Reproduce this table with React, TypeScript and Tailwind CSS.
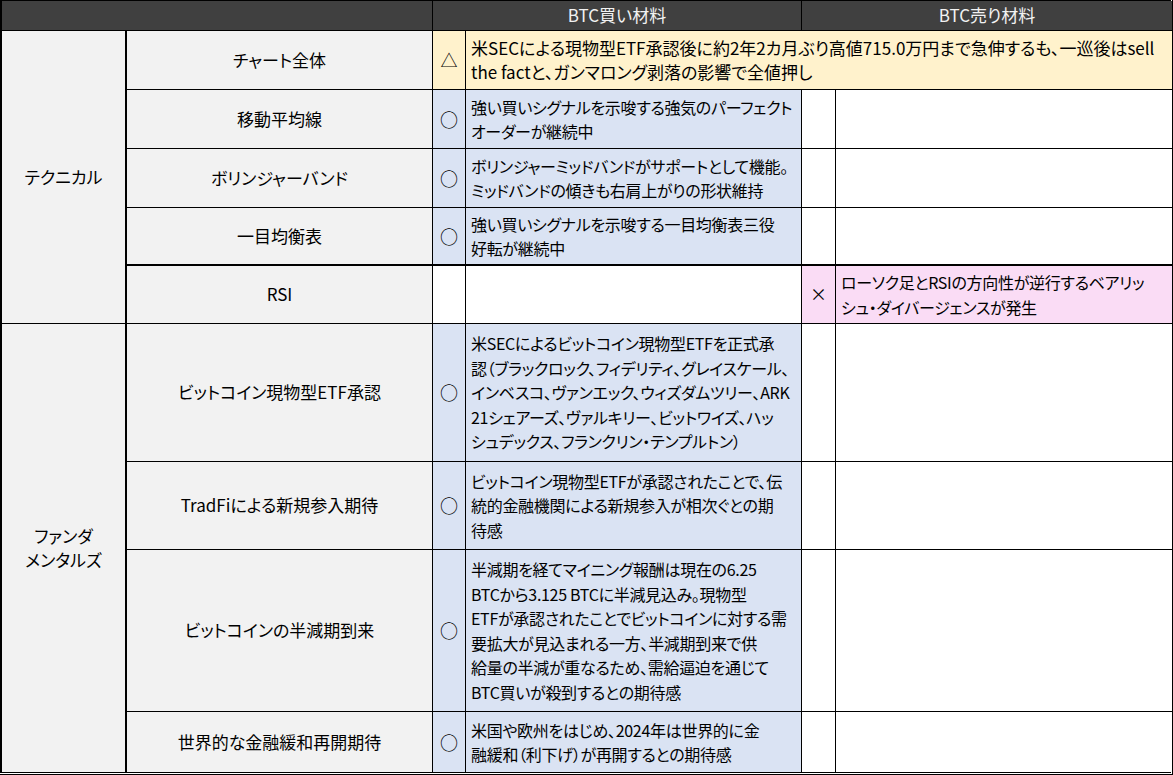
import React from "react";

type Row = {
  item: string;
  buyMark: string;
  buyLines: string[];
  sellMark: string;
  sellLines: string[];
  buyBg: string;
  sellBg: string;
  thickBottom?: boolean;
  last?: boolean;
};

const technical: Row[] = [
  {
    item: "移動平均線",
    buyMark: "○",
    buyLines: ["強い買いシグナルを示唆する強気のパーフェクト", "オーダーが継続中"],
    sellMark: "",
    sellLines: [],
    buyBg: "bg-[#dae3f3]",
    sellBg: "bg-white",
  },
  {
    item: "ボリンジャーバンド",
    buyMark: "○",
    buyLines: ["ボリンジャーミッドバンドがサポートとして機能。", "ミッドバンドの傾きも右肩上がりの形状維持"],
    sellMark: "",
    sellLines: [],
    buyBg: "bg-[#dae3f3]",
    sellBg: "bg-white",
  },
  {
    item: "一目均衡表",
    buyMark: "○",
    buyLines: ["強い買いシグナルを示唆する一目均衡表三役", "好転が継続中"],
    sellMark: "",
    sellLines: [],
    buyBg: "bg-[#dae3f3]",
    sellBg: "bg-white",
    thickBottom: true,
  },
  {
    item: "RSI",
    buyMark: "",
    buyLines: [],
    sellMark: "×",
    sellLines: ["ローソク足とRSIの方向性が逆行するベアリッ", "シュ・ダイバージェンスが発生"],
    buyBg: "bg-white",
    sellBg: "bg-[#fadcf5]",
  },
];

const fundamentals: Row[] = [
  {
    item: "ビットコイン現物型ETF承認",
    buyMark: "○",
    buyLines: [
      "米SECによるビットコイン現物型ETFを正式承",
      "認（ブラックロック、フィデリティ、グレイスケール、",
      "インベスコ、ヴァンエック、ウィズダムツリー、ARK",
      "21シェアーズ、ヴァルキリー、ビットワイズ、ハッ",
      "シュデックス、フランクリン・テンプルトン）",
    ],
    sellMark: "",
    sellLines: [],
    buyBg: "bg-[#dae3f3]",
    sellBg: "bg-white",
  },
  {
    item: "TradFiによる新規参入期待",
    buyMark: "○",
    buyLines: ["ビットコイン現物型ETFが承認されたことで、伝", "統的金融機関による新規参入が相次ぐとの期", "待感"],
    sellMark: "",
    sellLines: [],
    buyBg: "bg-[#dae3f3]",
    sellBg: "bg-white",
  },
  {
    item: "ビットコインの半減期到来",
    buyMark: "○",
    buyLines: [
      "半減期を経てマイニング報酬は現在の6.25",
      "BTCから3.125 BTCに半減見込み。現物型",
      "ETFが承認されたことでビットコインに対する需",
      "要拡大が見込まれる一方、半減期到来で供",
      "給量の半減が重なるため、需給逼迫を通じて",
      "BTC買いが殺到するとの期待感",
    ],
    sellMark: "",
    sellLines: [],
    buyBg: "bg-[#dae3f3]",
    sellBg: "bg-white",
  },
  {
    item: "世界的な金融緩和再開期待",
    buyMark: "○",
    buyLines: ["米国や欧州をはじめ、2024年は世界的に金", "融緩和（利下げ）が再開するとの期待感"],
    sellMark: "",
    sellLines: [],
    buyBg: "bg-[#dae3f3]",
    sellBg: "bg-white",
    last: true,
  },
];

function Lines({ lines }: { lines: string[] }) {
  return (
    <div className="whitespace-nowrap text-[16px] tracking-[-0.3px]">
      {lines.map((l, i) => (
        <div key={i}>{l}</div>
      ))}
    </div>
  );
}

function BodyRow({ row }: { row: Row }) {
  const b = row.last ? "" : row.thickBottom ? "border-b-2 border-black" : "border-b border-black";
  return (
    <>
      <div className={`flex items-center justify-center bg-[#f2f2f2] border-r border-black ${b}`}>{row.item}</div>
      <div className={`flex items-center justify-center text-[18px] border-r border-black ${row.buyBg} ${b}`}>
        {row.buyMark}
      </div>
      <div className={`flex items-center pl-[5px] overflow-hidden border-r border-black ${row.buyBg} ${b}`}>
        <Lines lines={row.buyLines} />
      </div>
      <div className={`flex items-center justify-center border-r border-black ${row.sellBg} ${b}`}>{row.sellMark}</div>
      <div className={`flex items-center pl-[5px] overflow-hidden ${row.sellBg} ${b}`}>
        <Lines lines={row.sellLines} />
      </div>
    </>
  );
}

export default function App() {
  return (
    <div className="w-[1173px] h-[775px] bg-white font-['Noto_Sans_CJK_JP','Noto_Sans',sans-serif] text-[17px] leading-[24.5px] text-black [font-feature-settings:'palt']">
      <div className="w-[1173px] h-[775px] border-r-[3px] border-b-[3px] border-double border-black">
        <div className="grid grid-cols-[125px_306px_33px_336px_34px_336px] grid-rows-[30px_59px_59px_59px_58px_58px_138px_88px_162px_60px] border-l-2 border-t border-black">
          <div className="col-span-2 bg-[#404040] border-r border-b border-black" />
          <div className="col-span-2 flex items-center justify-center bg-[#404040] text-[#f2f2f2] border-r border-b border-black">
            BTC買い材料
          </div>
          <div className="col-span-2 flex items-center justify-center bg-[#404040] text-[#f2f2f2] border-b border-black">
            BTC売り材料
          </div>

          <div className="row-span-5 flex items-center justify-center bg-[#f2f2f2] border-r-2 border-b border-black">
            テクニカル
          </div>
          <div className="flex items-center justify-center bg-[#f2f2f2] border-r border-b border-black">チャート全体</div>
          <div className="flex items-center justify-center bg-[#fff2cc] border-r border-b border-black">△</div>
          <div className="col-span-3 flex items-center pl-[5px] bg-[#fff2cc] border-b border-black">
            <div className="whitespace-nowrap">
              <div>米SECによる現物型ETF承認後に約2年2カ月ぶり高値715.0万円まで急伸するも、一巡後はsell</div>
              <div>the factと、ガンマロング剥落の影響で全値押し</div>
            </div>
          </div>
          {technical.map((r) => (
            <BodyRow key={r.item} row={r} />
          ))}

          <div className="row-span-4 flex items-center justify-center text-center bg-[#f2f2f2] border-r-2 border-black">
            ファンダ
            <br />
            メンタルズ
          </div>
          {fundamentals.map((r) => (
            <BodyRow key={r.item} row={r} />
          ))}
        </div>
      </div>
    </div>
  );
}
